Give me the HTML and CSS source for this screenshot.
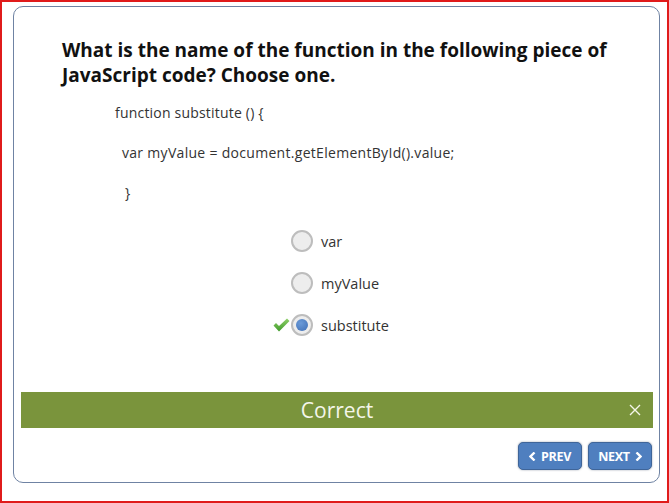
FILE: index.html
```html
<!DOCTYPE html>
<html>
<head>
<meta charset="utf-8">
<link rel="stylesheet" href="styles.css">
</head>
<body>
<div class="frame">
  <div class="card">
    <h1 class="question">What is the name of the function in the following piece of JavaScript code? Choose one.</h1>
    <div class="code">
      <p class="l1">function substitute () {</p>
      <p class="l2">var myValue = document.getElementById().value;</p>
      <p class="l3">}</p>
    </div>
    <ul class="options">
      <li class="opt"><span class="mark"></span><span class="radio"></span><span class="label">var</span></li>
      <li class="opt"><span class="mark"></span><span class="radio"></span><span class="label">myValue</span></li>
      <li class="opt"><span class="mark"><svg width="17" height="14" viewBox="0 0 17 14"><defs><linearGradient id="g" x1="0" y1="0" x2="0" y2="1"><stop offset="0" stop-color="#8fd06a"/><stop offset="1" stop-color="#3f9a2a"/></linearGradient></defs><path d="M0.5 7.5 L3 5 L6 8 L14 0.5 L16.5 3 L6 13.5 Z" fill="url(#g)"/></svg></span><span class="radio checked"></span><span class="label">substitute</span></li>
    </ul>
    <div class="feedback">
      <span class="fb-text">Correct</span>
      <svg class="fb-close" width="12" height="12" viewBox="0 0 12 12"><path d="M1 1 L11 11 M11 1 L1 11" stroke="#f4f6ea" stroke-width="1.4"/></svg>
    </div>
    <div class="nav">
      <button class="btn"><svg width="7" height="9" viewBox="0 0 7 9"><path d="M5.5 0.5 L1.5 4.5 L5.5 8.5" fill="none" stroke="#fff" stroke-width="2.4"/></svg>PREV</button>
      <button class="btn">NEXT<svg width="7" height="9" viewBox="0 0 7 9"><path d="M1.5 0.5 L5.5 4.5 L1.5 8.5" fill="none" stroke="#fff" stroke-width="2.4"/></svg></button>
    </div>
  </div>
</div>
</body>
</html>
```

FILE: styles.css
```css
* { box-sizing: border-box; }
html, body { margin: 0; padding: 0; }
body {
  width: 669px;
  height: 503px;
  font-family: "Open Sans", "Liberation Sans", sans-serif;
  background: #fff;
  overflow: hidden;
}
.frame {
  width: 669px;
  height: 503px;
  border: 2px solid #e01b1b;
  padding: 4px 8px 0 11px;
}
.card {
  width: 647px;
  height: 477px;
  border: 1px solid #6f83a3;
  border-radius: 10px;
  padding: 0 6px 0 7px;
  display: flex;
  flex-direction: column;
}
.question {
  margin: 31px 0 0 41px;
  font-size: 19px;
  line-height: 25px;
  font-weight: 700;
  color: #111;
  letter-spacing: 0;
  width: 570px;
}
.code {
  margin: 15px 0 0 0;
  font-size: 14px;
  color: #333;
}
.code p { margin: 0; height: 40px; line-height: 20px; }
.l1 { padding-left: 94px; letter-spacing: 0.2px; }
.l2 { padding-left: 101px; letter-spacing: 0.3px; }
.l3 { padding-left: 104px; }
.options {
  list-style: none;
  margin: 7px 0 0 0;
  padding: 0 0 0 252px;
  display: flex;
  flex-direction: column;
  gap: 20px;
}
.opt {
  display: flex;
  align-items: center;
  height: 22px;
}
.mark {
  width: 18px;
  height: 14px;
  display: flex;
  align-items: center;
}
.radio {
  width: 22px;
  height: 22px;
  border-radius: 50%;
  border: 2px solid #bdbdbd;
  background: #ededed;
  position: relative;
}
.radio.checked::after {
  content: "";
  position: absolute;
  left: 3px; top: 3px;
  width: 12px; height: 12px;
  border-radius: 50%;
  background: radial-gradient(circle at 40% 35%, #6a9ad8, #3f6fb6);
}
.label {
  margin-left: 8px;
  font-size: 14.5px;
  color: #333;
}
.feedback {
  margin-top: 56px;
  height: 36px;
  background: #7a943c;
  display: flex;
  align-items: center;
  justify-content: center;
  position: relative;
}
.fb-text {
  font-size: 21px;
  color: #f4f6ea;
}
.fb-close {
  position: absolute;
  right: 12px;
  top: 12px;
}
.nav {
  margin-top: 14px;
  padding-right: 1px;
  display: flex;
  justify-content: flex-end;
  gap: 6px;
}
.btn {
  height: 28px;
  width: 64px;
  border: 1px solid #3f6599;
  border-radius: 5px;
  background: #4f7fbf;
  color: #fff;
  font-family: "Open Sans", sans-serif;
  font-weight: 700;
  font-size: 12.5px;
  letter-spacing: -0.3px;
  display: flex;
  align-items: center;
  justify-content: center;
  gap: 5px;
  padding: 0;
  box-shadow: 0 0 2px rgba(40,60,90,0.5);
}
```
